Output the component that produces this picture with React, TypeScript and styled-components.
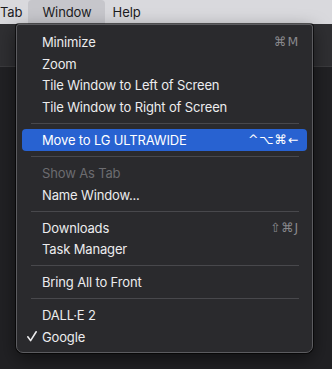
import React from "react";
import styled, { createGlobalStyle } from "styled-components";

const GlobalStyle = createGlobalStyle`
  html, body { margin: 0; padding: 0; background: #212124; }
  body { font-family: Inter, "Noto Sans", "DejaVu Sans", sans-serif; -webkit-font-smoothing: antialiased; }
`;

const Screen = styled.div`
  position: relative;
  width: 332px;
  height: 369px;
  overflow: hidden;
  display: flex;
  flex-direction: column;
  background: #212124;
`;

const MenuBar = styled.div`
  height: 24px;
  flex: none;
  display: flex;
  align-items: stretch;
  background: #d9d9dd;
  color: #1c1c1e;
  font-size: 13px;
  letter-spacing: -0.1px;
`;

const MenuTitle = styled.div<{ $active?: boolean; $pad: string }>`
  display: flex;
  align-items: center;
  padding: ${(p) => p.$pad};
  background: ${(p) => (p.$active ? "#c6c6cb" : "transparent")};
  border-radius: ${(p) => (p.$active ? "4px 4px 0 0" : "0")};
`;

const Toolbar = styled.div`
  height: 42px;
  flex: none;
  background: #2f2f32;
  border-bottom: 1px solid #3b3b3e;
`;

const Content = styled.div`
  flex: 1;
  background: #212124;
`;

const Menu = styled.div`
  position: absolute;
  top: 24px;
  left: 16px;
  width: 297px;
  box-sizing: border-box;
  padding: 6px 5px 4px;
  background: #2a2a2d;
  border: 1px solid #5c5c60;
  border-radius: 3px 3px 7px 7px;
  box-shadow: 0 6px 18px rgba(0, 0, 0, 0.5), 0 0 0 1px rgba(0, 0, 0, 0.6);
  color: #ececee;
  font-size: 13px;
  letter-spacing: -0.15px;
`;

const Item = styled.div<{ $selected?: boolean; $disabled?: boolean }>`
  height: 21.7px;
  display: flex;
  align-items: center;
  padding-right: 8px;
  border-radius: 4px;
  background: ${(p) => (p.$selected ? "#2862d1" : "transparent")};
  color: ${(p) => (p.$disabled ? "#6c6c70" : p.$selected ? "#ffffff" : "#ececee")};
`;

const CheckSlot = styled.span`
  width: 20px;
  flex: none;
  display: flex;
  justify-content: center;
  align-items: center;
`;

const Label = styled.span`
  flex: 1;
  white-space: nowrap;
`;

const Shortcut = styled.span<{ $selected?: boolean }>`
  font-family: "DejaVu Sans", sans-serif;
  font-size: 12.5px;
  letter-spacing: 0.8px;
  color: ${(p) => (p.$selected ? "#ffffff" : "#88888c")};
  white-space: nowrap;
`;

const Separator = styled.div`
  height: 11.3px;
  display: flex;
  align-items: center;
  padding: 0 8px 0 9px;
  &::after {
    content: "";
    flex: 1;
    height: 1px;
    background: #48484c;
  }
`;

type Entry =
  | { kind: "sep" }
  | { kind: "item"; label: string; shortcut?: string; selected?: boolean; disabled?: boolean; checked?: boolean };

const entries: Entry[] = [
  { kind: "item", label: "Minimize", shortcut: "⌘M" },
  { kind: "item", label: "Zoom" },
  { kind: "item", label: "Tile Window to Left of Screen" },
  { kind: "item", label: "Tile Window to Right of Screen" },
  { kind: "sep" },
  { kind: "item", label: "Move to LG ULTRAWIDE", shortcut: "^⌥⌘←", selected: true },
  { kind: "sep" },
  { kind: "item", label: "Show As Tab", disabled: true },
  { kind: "item", label: "Name Window..." },
  { kind: "sep" },
  { kind: "item", label: "Downloads", shortcut: "⇧⌘J" },
  { kind: "item", label: "Task Manager" },
  { kind: "sep" },
  { kind: "item", label: "Bring All to Front" },
  { kind: "sep" },
  { kind: "item", label: "DALL·E 2" },
  { kind: "item", label: "Google", checked: true },
];

const CheckIcon = () => (
  <svg width="10" height="11" viewBox="0 0 10 11">
    <path d="M0.8 5.8 L3.6 9.6 L9.2 0.8" fill="none" stroke="#ececee" strokeWidth="1.6" strokeLinecap="round" strokeLinejoin="round" />
  </svg>
);

export default function App() {
  return (
    <>
      <GlobalStyle />
      <Screen>
        <MenuBar>
          <MenuTitle $pad="0 6px 0 0">Tab</MenuTitle>
          <MenuTitle $active $pad="0 13px 0 14px">Window</MenuTitle>
          <MenuTitle $pad="0 8px">Help</MenuTitle>
        </MenuBar>
        <Toolbar />
        <Content />
        <Menu>
          {entries.map((e, i) =>
            e.kind === "sep" ? (
              <Separator key={i} />
            ) : (
              <Item key={i} $selected={e.selected} $disabled={e.disabled}>
                <CheckSlot>{e.checked ? <CheckIcon /> : null}</CheckSlot>
                <Label>{e.label}</Label>
                {e.shortcut ? <Shortcut $selected={e.selected}>{e.shortcut}</Shortcut> : null}
              </Item>
            )
          )}
        </Menu>
      </Screen>
    </>
  );
}
